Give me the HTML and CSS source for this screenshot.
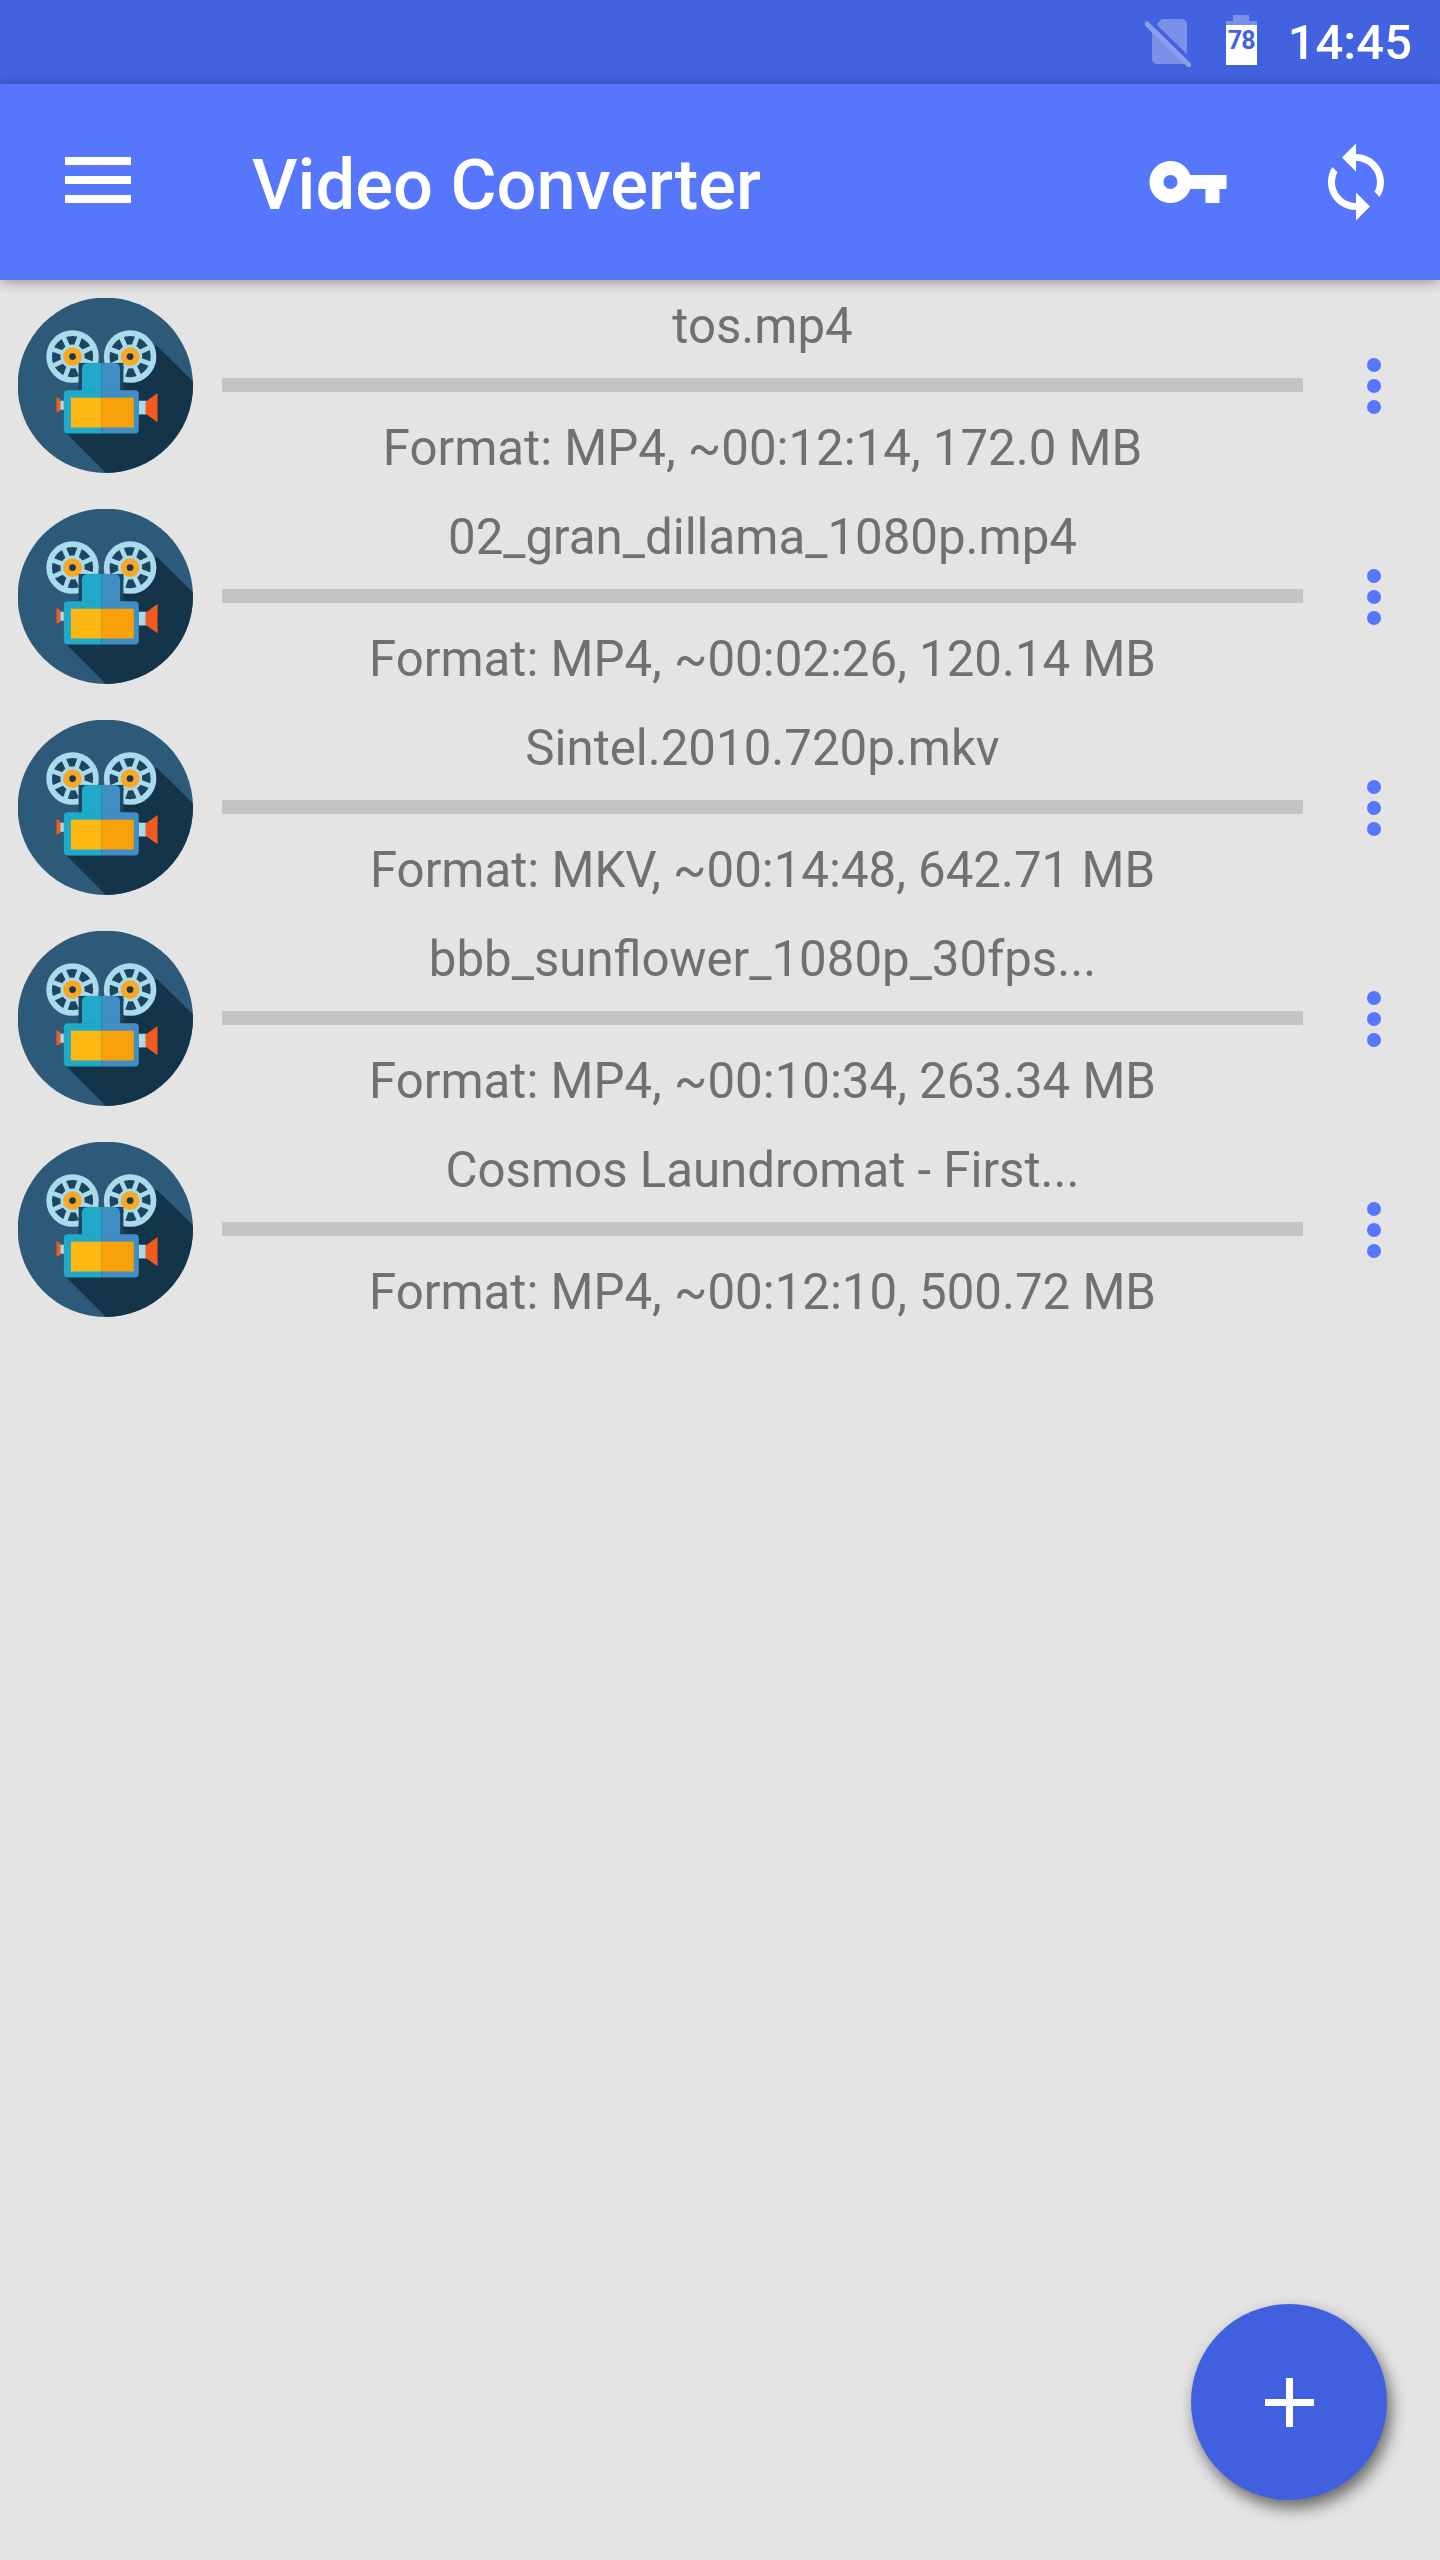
FILE: index.html
```html
<!DOCTYPE html>
<html lang="en">
  <head>
    <meta charset="UTF-8" />
    <meta name="viewport" content="width=device-width, initial-scale=1.0" />
    <title>Video Converter</title>
    <link rel="stylesheet" href="styles.css">
  </head>
  <body>
    <!-- shared artwork for the list rows -->
    <svg class="defs" width="0" height="0" aria-hidden="true">
      <defs>
        <clipPath id="disc"><circle cx="316" cy="346" r="262" /></clipPath>
        <g id="reel">
          <circle r="70" fill="#1d4560" stroke="#a9dbec" stroke-width="17" />
          <g stroke="#a9dbec" stroke-width="14" transform="rotate(20)">
            <line x1="-70" y1="0" x2="70" y2="0" />
            <line x1="0" y1="-70" x2="0" y2="70" />
            <line x1="-50" y1="-50" x2="50" y2="50" />
            <line x1="-50" y1="50" x2="50" y2="-50" />
          </g>
          <circle r="36" fill="#a9dbec" />
          <circle r="28" fill="#f9a825" />
          <circle r="10" fill="#17394f" />
        </g>
        <symbol id="film" viewBox="55 85 523 523">
          <circle cx="316" cy="346" r="262" fill="#2c5a78" />
          <polygon clip-path="url(#disc)" points="470,228 600,356 600,620 330,620 192,482 300,330" fill="#14344a" />
          <use href="#reel" x="218" y="260" />
          <use href="#reel" x="390" y="260" />
          <rect x="236" y="279" width="134" height="95" fill="#1d4560" />
          <path d="M304 279h-40q-18 0-18 18v65h58z" fill="#20a9c8" />
          <path d="M304 279h38q18 0 18 18v65h-56z" fill="#3f8ec4" />
          <path d="M304 361h-100q-12 0-12 12v105q0 12 12 12h100z" fill="#20a9c8" />
          <path d="M304 361h100q12 0 12 12v105q0 12-12 12h-100z" fill="#3f8ec4" />
          <rect x="213" y="383" width="91" height="89" fill="#fdb813" />
          <rect x="304" y="383" width="97" height="89" fill="#f9a10a" />
          <rect x="416" y="392" width="22" height="41" fill="#a9dbec" />
          <polygon points="436,395 472,369 472,456 436,431" fill="#f4591f" />
          <rect x="180" y="392" width="12" height="27" fill="#a9dbec" />
          <polygon points="182,388 170,381 170,428 182,422" fill="#f4591f" />
        </symbol>
      </defs>
    </svg>

    <div class="status-bar">
      <svg class="sim-icon" viewBox="0 0 46 52" width="46" height="52">
        <path d="M17 4h20a5 5 0 0 1 5 5v35a5 5 0 0 1-5 5H12a5 5 0 0 1-5-5V14z" fill="#fff" fill-opacity=".3" />
        <line x1="5" y1="6" x2="48" y2="48" stroke="#4362e0" stroke-width="4" />
        <line x1="2" y1="9" x2="45" y2="51" stroke="#8a9eec" stroke-width="5" stroke-linecap="round" />
      </svg>
      <div class="battery">
        <span class="battery-tab"></span>
        <span class="battery-top"></span>
        <span class="battery-body">78</span>
      </div>
      <span class="clock">14:45</span>
    </div>

    <header class="app-bar">
      <svg class="menu-icon" viewBox="0 0 66 46" width="66" height="46">
        <rect y="0" width="66" height="8" fill="#fff" />
        <rect y="19" width="66" height="8" fill="#fff" />
        <rect y="38" width="66" height="8" fill="#fff" />
      </svg>
      <h1 class="app-title">Video Converter</h1>
      <svg class="bar-icon key-icon" viewBox="0 0 24 24" width="84" height="84">
        <path fill="#fff" d="M12.65 10C11.83 7.67 9.61 6 7 6c-3.31 0-6 2.69-6 6s2.69 6 6 6c2.61 0 4.83-1.67 5.65-4H17v4h4v-4h2v-4H12.65zM7 14c-1.1 0-2-.9-2-2s.9-2 2-2 2 .9 2 2-.9 2-2 2z" />
      </svg>
      <svg class="bar-icon sync-icon" viewBox="0 0 24 24" width="84" height="84">
        <path fill="#fff" d="M12 4V1L8 5l4 4V6c3.31 0 6 2.69 6 6 0 1.01-.25 1.97-.7 2.8l1.46 1.46C19.54 15.03 20 13.57 20 12c0-4.42-3.58-8-8-8zm0 14c-3.31 0-6-2.69-6-6 0-1.01.25-1.97.7-2.8L5.24 7.74C4.46 8.97 4 10.43 4 12c0 4.42 3.58 8 8 8v3l4-4-4-4v3z" />
      </svg>
    </header>

    <main class="video-list">
      <div class="video-row">
        <svg class="video-thumb" width="175" height="175"><use href="#film" /></svg>
        <div class="video-info">
          <div class="video-name">tos.mp4</div>
          <div class="video-progress"></div>
          <div class="video-meta">Format: MP4, ~00:12:14, 172.0 MB</div>
        </div>
        <div class="row-menu"><span></span><span></span><span></span></div>
      </div>
      <div class="video-row">
        <svg class="video-thumb" width="175" height="175"><use href="#film" /></svg>
        <div class="video-info">
          <div class="video-name">02_gran_dillama_1080p.mp4</div>
          <div class="video-progress"></div>
          <div class="video-meta">Format: MP4, ~00:02:26, 120.14 MB</div>
        </div>
        <div class="row-menu"><span></span><span></span><span></span></div>
      </div>
      <div class="video-row">
        <svg class="video-thumb" width="175" height="175"><use href="#film" /></svg>
        <div class="video-info">
          <div class="video-name">Sintel.2010.720p.mkv</div>
          <div class="video-progress"></div>
          <div class="video-meta">Format: MKV, ~00:14:48, 642.71 MB</div>
        </div>
        <div class="row-menu"><span></span><span></span><span></span></div>
      </div>
      <div class="video-row">
        <svg class="video-thumb" width="175" height="175"><use href="#film" /></svg>
        <div class="video-info">
          <div class="video-name">bbb_sunflower_1080p_30fps...</div>
          <div class="video-progress"></div>
          <div class="video-meta">Format: MP4, ~00:10:34, 263.34 MB</div>
        </div>
        <div class="row-menu"><span></span><span></span><span></span></div>
      </div>
      <div class="video-row">
        <svg class="video-thumb" width="175" height="175"><use href="#film" /></svg>
        <div class="video-info">
          <div class="video-name">Cosmos Laundromat - First...</div>
          <div class="video-progress"></div>
          <div class="video-meta">Format: MP4, ~00:12:10, 500.72 MB</div>
        </div>
        <div class="row-menu"><span></span><span></span><span></span></div>
      </div>
    </main>

    <button class="fab" aria-label="Add">
      <svg viewBox="0 0 49 49" width="49" height="49">
        <rect x="21" width="7" height="49" fill="#fff" />
        <rect y="21" width="49" height="7" fill="#fff" />
      </svg>
    </button>
  </body>
</html>
```

FILE: styles.css
```css
/* General Page Styling */
html,
body {
  margin: 0;
  height: 2560px;
}

body {
  position: relative;
  overflow: hidden;
  font-family: Roboto, "Noto Sans", sans-serif;
  background-color: #e4e4e4;
  color: #707070;
}

.defs {
  position: absolute;
}

/* Status bar */
.status-bar {
  display: flex;
  align-items: center;
  justify-content: flex-end;
  height: 84px;
  padding-right: 28px;
  box-sizing: border-box;
  background-color: #4362e0;
  color: #fff;
}

.sim-icon {
  margin: 0 35px 2px 0;
}

.battery {
  display: flex;
  flex-direction: column;
  align-items: center;
  width: 31px;
  height: 50px;
  margin: 0 31px 4px 0;
}

.battery-tab {
  width: 16px;
  height: 6px;
  background-color: rgba(255, 255, 255, 0.3);
}

.battery-top {
  width: 31px;
  height: 4px;
  background-color: rgba(255, 255, 255, 0.3);
}

.battery-body {
  width: 31px;
  height: 40px;
  background-color: #fff;
  color: #4362e0;
  font-size: 25px;
  font-weight: 700;
  line-height: 32px;
  letter-spacing: -1px;
  text-align: center;
}

.clock {
  font-size: 49px;
  font-weight: 500;
}

/* App bar */
.app-bar {
  position: relative;
  z-index: 1;
  display: flex;
  align-items: center;
  height: 196px;
  background-color: #5677fc;
  box-shadow: 0 2px 12px rgba(0, 0, 0, 0.35);
}

.menu-icon {
  margin: 0 0 4px 65px;
}

.app-title {
  flex: 1;
  margin: 6px 0 0 121px;
  font-size: 70.5px;
  font-weight: 500;
  color: #fff;
}

.key-icon {
  margin-right: 84px;
}

.sync-icon {
  margin-right: 42px;
}

/* Video rows */
.video-row {
  display: flex;
  align-items: center;
  height: 211px;
}

.video-thumb {
  flex: none;
  margin-left: 18px;
}

.video-info {
  display: flex;
  flex-direction: column;
  width: 1081px;
  height: 211px;
  margin-left: 29px;
  text-align: center;
}

.video-name,
.video-meta {
  height: 98px;
  font-size: 49.2px;
  line-height: 93px;
  white-space: nowrap;
}

.video-meta {
  height: 99px;
  line-height: 113px;
}

.video-progress {
  height: 14px;
  background-color: #c4c4c4;
}

.row-menu {
  display: flex;
  flex-direction: column;
  gap: 7px;
  margin-left: 64px;
}

.row-menu span {
  width: 14px;
  height: 14px;
  border-radius: 50%;
  background-color: #5677fc;
}

/* Floating button */
.fab {
  position: absolute;
  left: 1191px;
  top: 2304px;
  display: flex;
  align-items: center;
  justify-content: center;
  width: 196px;
  height: 196px;
  padding: 0;
  border: none;
  border-radius: 50%;
  background-color: #4060df;
  box-shadow: 4px 8px 16px rgba(0, 0, 0, 0.55);
}
```
